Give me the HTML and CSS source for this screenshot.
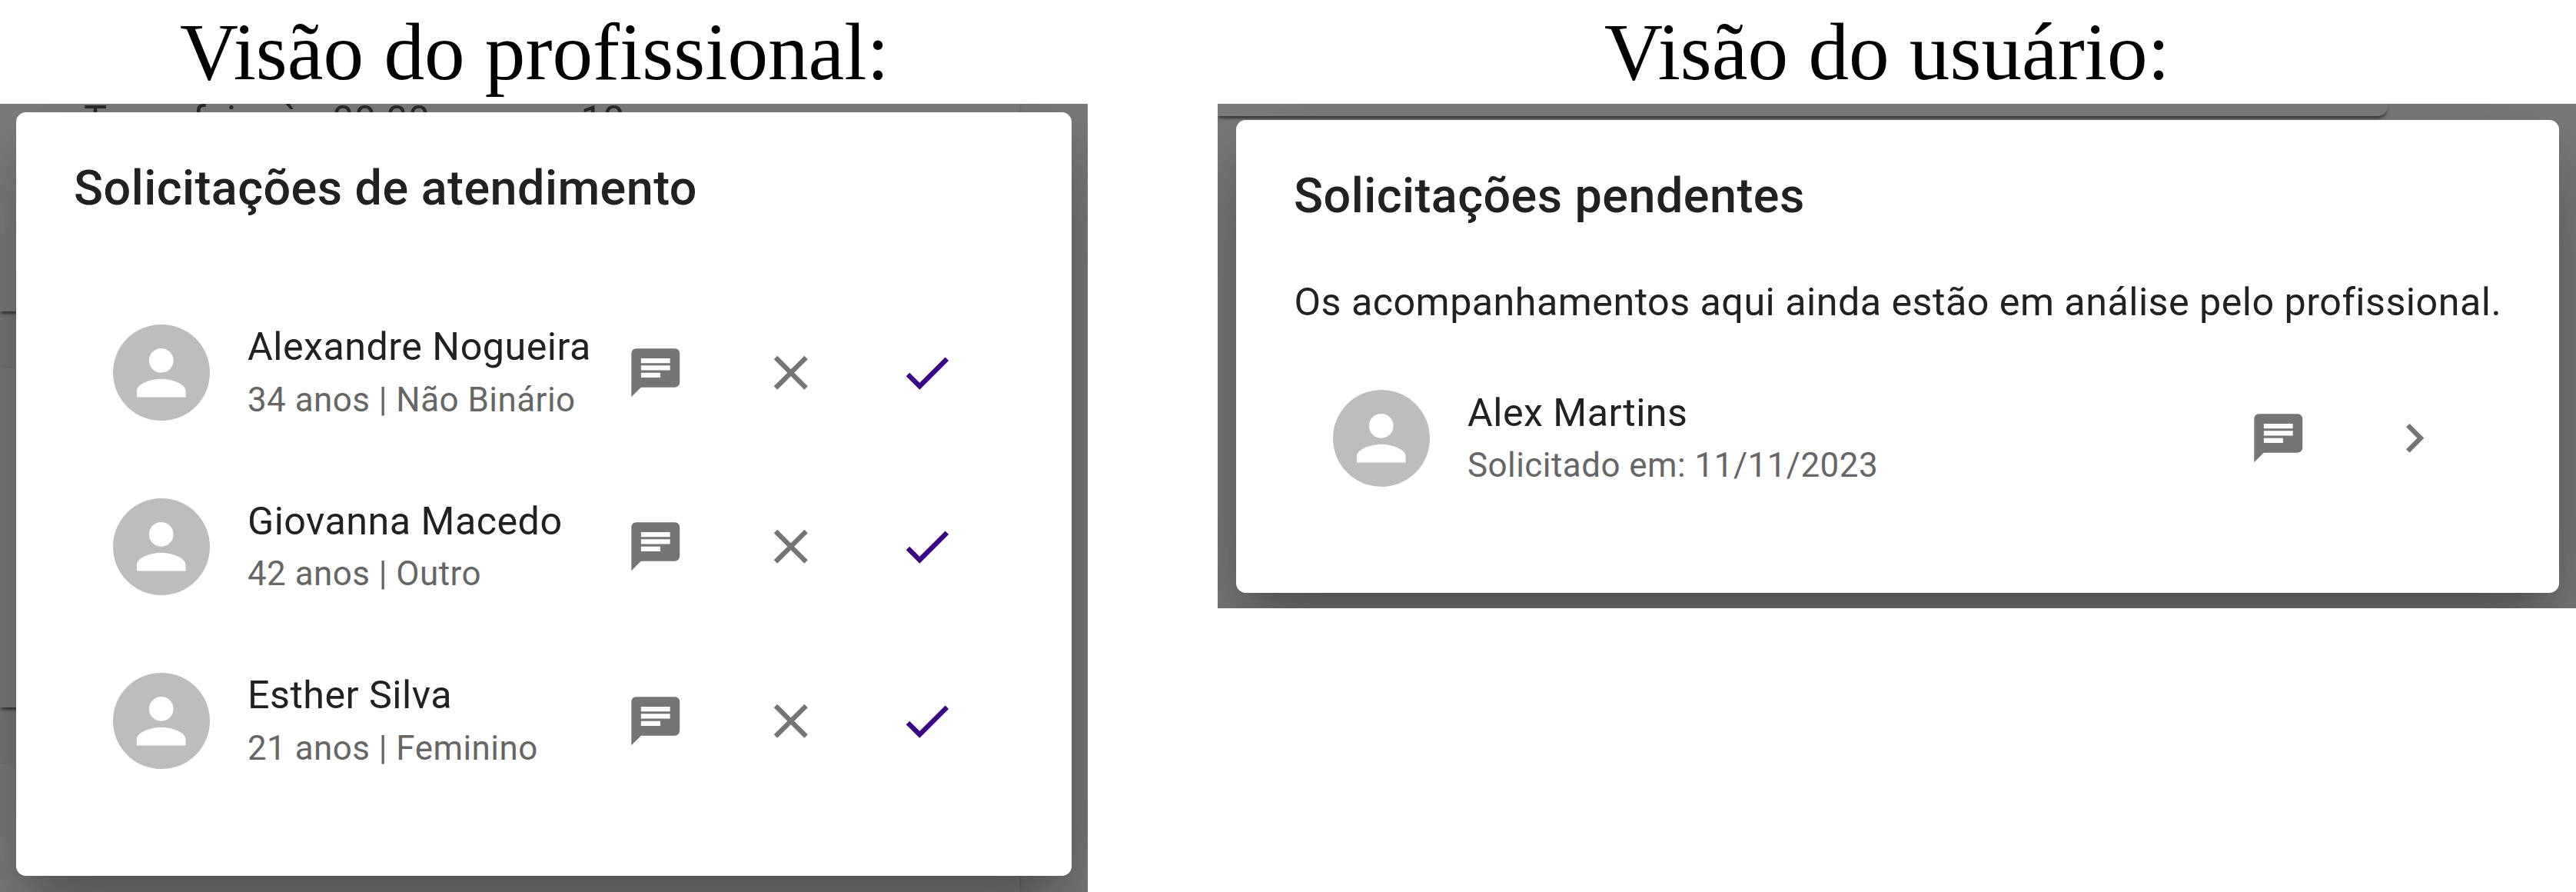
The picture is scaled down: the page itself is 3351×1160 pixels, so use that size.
FILE: index.html
```html
<!DOCTYPE html>
<html lang="pt-BR">
<head>
<meta charset="utf-8">
<title>Solicitações</title>
<link rel="stylesheet" href="styles.css">
</head>
<body>
<svg class="defs" aria-hidden="true">
  <symbol id="person" viewBox="0 0 24 24"><path d="M12 12c2.21 0 4-1.79 4-4s-1.79-4-4-4-4 1.790-4 4 1.790 4 4 4zm0 2c-2.670 0-8 1.340-8 4v2h16v-2c0-2.660-5.330-4-8-4z"/></symbol>
  <symbol id="chat" viewBox="0 0 24 24"><path d="M20 2H4c-1.100 0-1.990.9-1.990 2L2 22l4-4h14c1.100 0 2-.9 2-2V4c0-1.100-.9-2-2-2zM6 9h12v2H6V9zm8 5H6v-2h8v2zm4-6H6V6h12v2z"/></symbol>
  <symbol id="close" viewBox="0 0 24 24"><path d="M19 6.410 17.590 5 12 10.590 6.410 5 5 6.410 10.590 12 5 17.590 6.410 19 12 13.410 17.590 19 19 17.590 13.410 12z"/></symbol>
  <symbol id="check" viewBox="0 0 24 24"><path d="M9 16.170 4.830 12l-1.420 1.410L9 19 21 7l-1.410-1.410z"/></symbol>
  <symbol id="chevron" viewBox="0 0 24 24"><path d="M10 6 8.590 7.410 13.170 12l-4.580 4.590L10 18l6-6z"/></symbol>
</svg>
<main class="views">
  <section class="view view-pro">
    <h1 class="view-title">Visão do profissional:</h1>
    <div class="screen">
      <div class="page">
        <div class="card card-first"><p class="slot"><span>Terça-feira às 00:00</span><span>10</span></p></div>
        <div class="card card-middle"></div>
        <div class="card card-last"></div>
      </div>
      <div class="dialog">
        <h2 class="dialog-title">Solicitações de atendimento</h2>
        <ul class="list">
          <li class="item">
            <span class="avatar"><svg class="icon"><use href="#person"/></svg></span>
            <div class="info"><p class="name">Alexandre Nogueira</p><p class="detail">34 anos | Não Binário</p></div>
            <div class="actions"><svg class="icon"><use href="#chat"/></svg><svg class="icon"><use href="#close"/></svg><svg class="icon accept"><use href="#check"/></svg></div>
          </li>
          <li class="item">
            <span class="avatar"><svg class="icon"><use href="#person"/></svg></span>
            <div class="info"><p class="name">Giovanna Macedo</p><p class="detail">42 anos | Outro</p></div>
            <div class="actions"><svg class="icon"><use href="#chat"/></svg><svg class="icon"><use href="#close"/></svg><svg class="icon accept"><use href="#check"/></svg></div>
          </li>
          <li class="item">
            <span class="avatar"><svg class="icon"><use href="#person"/></svg></span>
            <div class="info"><p class="name">Esther Silva</p><p class="detail">21 anos | Feminino</p></div>
            <div class="actions"><svg class="icon"><use href="#chat"/></svg><svg class="icon"><use href="#close"/></svg><svg class="icon accept"><use href="#check"/></svg></div>
          </li>
        </ul>
      </div>
    </div>
  </section>
  <section class="view view-user">
    <h1 class="view-title">Visão do usuário:</h1>
    <div class="screen">
      <div class="page">
        <div class="card card-top"></div>
      </div>
      <div class="dialog">
        <h2 class="dialog-title">Solicitações pendentes</h2>
        <p class="message">Os acompanhamentos aqui ainda estão em análise pelo profissional.</p>
        <ul class="list">
          <li class="item">
            <span class="avatar"><svg class="icon"><use href="#person"/></svg></span>
            <div class="info"><p class="name">Alex Martins</p><p class="detail">Solicitado em: 11/11/2023</p></div>
            <div class="actions"><svg class="icon"><use href="#chat"/></svg><svg class="icon"><use href="#chevron"/></svg></div>
          </li>
        </ul>
      </div>
    </div>
  </section>
</main>
</body>
</html>
```
FILE: styles.css
```css
:root {
  --u: 3.146px;
}

* {
  box-sizing: border-box;
  margin: 0;
  padding: 0;
}

body {
  background: #fff;
  color: #212121;
  font-family: Roboto, sans-serif;
  overflow: hidden;
}

.defs {
  display: none;
}

.views {
  display: flex;
  justify-content: space-between;
  align-items: flex-start;
  width: 3351px;
  height: 1160px;
}

.view-pro {
  width: 1414.5px;
}

.view-user {
  width: 1767px;
}

.view-title {
  height: 135px;
  padding-top: 8px;
  color: #000;
  font: 400 105.2px/120px "Liberation Serif", serif;
  white-space: nowrap;
}

.view-pro .view-title {
  padding-left: 234px;
}

.view-user .view-title {
  padding-left: 503px;
}

.screen {
  position: relative;
  overflow: hidden;
  background: #7c7c7c;
}

.view-pro .screen {
  height: 1024.5px;
  padding: 10.5px 21px 0;
}

.view-user .screen {
  height: 656px;
  padding: 20.5px 22.5px 0 24px;
}

/* Dimmed page behind the dialog */
.page {
  position: absolute;
  inset: 0;
}

.card {
  background: #7f7f7f;
  border-radius: 0 0 12.6px 0;
  box-shadow: 0 6px 3px -3px rgba(0, 0, 0, .3), 0 3px 3px rgba(0, 0, 0, .2), 0 3px 9px rgba(0, 0, 0, .1);
}

.view-pro .card {
  width: 1326px;
}

.card-first {
  height: 270px;
}

.card-middle {
  height: 441px;
  margin-top: 74px;
}

.card-last {
  height: 200px;
  margin-top: 74px;
}

.card-top {
  width: 1522px;
  height: 16px;
}

.slot {
  display: flex;
  gap: 196px;
  padding-left: 109px;
  color: #2b2b2b;
  font-size: 50.3px;
  line-height: 42px;
  letter-spacing: .00938em;
}

.dialog {
  position: relative;
  background: #fff;
  border-radius: 12.6px;
  box-shadow:
    0 34.6px 47.2px -22px rgba(0, 0, 0, .2),
    0 75.5px 119.5px 9.4px rgba(0, 0, 0, .14),
    0 28.3px 144.7px 25.2px rgba(0, 0, 0, .12);
}

.view-pro .dialog {
  height: 993px;
}

.view-user .dialog {
  height: 615px;
}

.dialog-title {
  height: 200.5px;
  padding: 49px 75px 0;
  font-size: 62.85px;
  font-weight: 500;
  line-height: 100.6px;
  letter-spacing: .0075em;
}

.message {
  height: 75.5px;
  padding: 0 75.5px;
  font-size: 50.25px;
  line-height: 73.5px;
  letter-spacing: .00938em;
  white-space: nowrap;
}

.list {
  padding: 25.2px 75.5px;
  list-style: none;
}

.item {
  display: flex;
  align-items: center;
  height: 226.5px;
  padding: 0 50.3px;
}

.avatar {
  display: flex;
  flex: none;
  align-items: center;
  justify-content: center;
  width: calc(40 * var(--u));
  height: calc(40 * var(--u));
  margin-right: calc(16 * var(--u));
  border-radius: 50%;
  background: #bdbdbd;
  color: #fff;
}

.icon {
  display: block;
  width: calc(24 * var(--u));
  height: calc(24 * var(--u));
  fill: currentColor;
}

.avatar .icon {
  width: 95.5px;
  height: 95.5px;
}

.info {
  flex: 1;
  margin-left: -1px;
  padding-bottom: 4px;
  white-space: nowrap;
}

.name {
  font-size: 50.25px;
  line-height: 75.5px;
  letter-spacing: .00938em;
}

.detail {
  color: #666;
  font-size: 43.95px;
  line-height: 63px;
  letter-spacing: .01071em;
}

.actions {
  display: flex;
  gap: calc(32 * var(--u));
  margin-right: 24.7px;
  color: #757575;
}

.accept {
  color: #3b0086;
}
```
